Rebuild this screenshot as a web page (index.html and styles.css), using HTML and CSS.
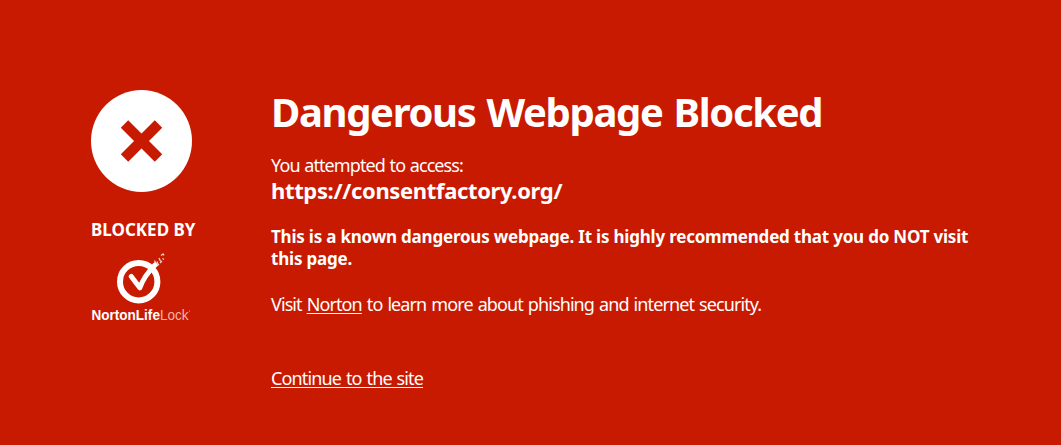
FILE: index.html
```html
<!DOCTYPE html>
<html lang="en">

<head>
    <meta charset="UTF-8">
    <meta name="viewport" content="width=device-width, initial-scale=1.0">
    <title>Dangerous Webpage Blocked</title>
    <link rel="stylesheet" href="styles.css">
</head>

<body>
    <div class="container">
        <div class="sidebar">
            <svg class="block-icon" viewBox="0 0 101 102">
                <ellipse cx="50.5" cy="51" rx="50.5" ry="51" fill="#fff"/>
                <path d="M33.5 34l34 34M67.5 34l-34 34" stroke="#c81a00" stroke-width="10.5"/>
            </svg>
            <div class="blocked-by">BLOCKED BY</div>
            <svg class="logo" viewBox="0 0 104 72">
                <circle cx="47.7" cy="29.7" r="18.7" fill="none" stroke="#fff" stroke-width="6"/>
                <path class="check" d="M40.3 24.4L48.8 35.8Q53 24 64 13"/>
                <path d="M63.5 8.5l1.5 3M66 9.5l1 3M68 6l1.5 3.2M71.5 6.5l1.5 1M70 3.5l2-1.5M73 3.5l-1-2M66 14l2-2M69 11l2-2" stroke="#fff" stroke-width="1.3" opacity=".8"/>
                <text class="logo-text" x="0.5" y="67.8" textLength="97" lengthAdjust="spacingAndGlyphs"><tspan class="heavy">NortonLife</tspan><tspan class="thin">Lock</tspan></text>
                <circle cx="98.5" cy="59" r=".6" fill="#fff" opacity=".7"/>
            </svg>
        </div>

        <div class="content">
            <h1>Dangerous Webpage Blocked</h1>
            <p class="attempt">You attempted to access:</p>
            <p class="url">https://consentfactory.org/</p>
            <p class="warning">This is a known dangerous webpage. It is highly recommended that you do NOT visit this page.</p>
            <p class="more">Visit <a href="#">Norton</a> to learn more about phishing and internet security.</p>
            <p class="continue"><a href="#">Continue to the site</a></p>
        </div>
    </div>
</body>

</html>
```
FILE: styles.css
```css
body {
    margin: 0;
    background: #c81a00;
    color: #fff;
    font-family: 'Noto Sans', 'Open Sans', sans-serif;
    font-size: 18px;
    line-height: 22px;
}

.container {
    display: flex;
    padding: 88px 0 0 91px;
}

.sidebar {
    width: 180px;
    flex-shrink: 0;
    padding-top: 2px;
}

.block-icon {
    display: block;
    width: 101px;
    height: 102px;
}

.blocked-by {
    margin-top: 27px;
    font-size: 17px;
    font-weight: 700;
    white-space: nowrap;
}

.logo {
    display: block;
    width: 104px;
    height: 72px;
    margin-top: 11px;
}

.check {
    fill: none;
    stroke: #fff;
    stroke-width: 5;
    stroke-linecap: round;
    stroke-linejoin: round;
}

.logo-text {
    font-family: 'Liberation Sans', Arial, sans-serif;
    font-size: 14px;
    fill: #fff;
}

.heavy {
    font-weight: bold;
}

.thin {
    fill: #f3b5ab;
}

.content {
    width: 715px;
}

h1 {
    margin: 0;
    font-size: 40px;
    font-weight: 700;
    line-height: 48px;
    letter-spacing: -1.35px;
    word-spacing: 2px;
    white-space: nowrap;
}

p {
    margin: 0;
}

a {
    color: #fff;
    text-decoration: underline;
    text-decoration-thickness: 1px;
    text-decoration-skip-ink: none;
    text-underline-offset: 2px;
}

.attempt {
    margin-top: 18px;
    letter-spacing: -0.9px;
    word-spacing: 0.8px;
}

.url {
    padding-top: 1px;
    font-size: 22px;
    font-weight: 700;
    line-height: 26px;
    letter-spacing: -0.35px;
}

.warning {
    width: 705px;
    margin-top: 23px;
    font-size: 17px;
    font-weight: 700;
    letter-spacing: -0.21px;
}

.more {
    margin-top: 23px;
    letter-spacing: -0.9px;
    word-spacing: 1.2px;
}

.continue {
    margin-top: 52px;
    letter-spacing: -0.85px;
    word-spacing: 1px;
}
```
